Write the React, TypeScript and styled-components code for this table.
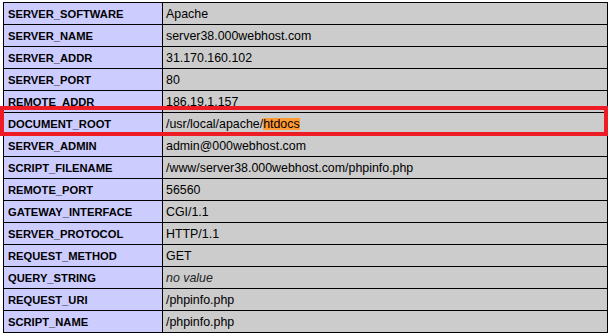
import styled, { createGlobalStyle } from "styled-components";

type Row = { key: string; value: string; empty?: boolean; mark?: string };

const rows: Row[] = [
  { key: "SERVER_SOFTWARE", value: "Apache" },
  { key: "SERVER_NAME", value: "server38.000webhost.com" },
  { key: "SERVER_ADDR", value: "31.170.160.102" },
  { key: "SERVER_PORT", value: "80" },
  { key: "REMOTE_ADDR", value: "186.19.1.157" },
  { key: "DOCUMENT_ROOT", value: "/usr/local/apache/", mark: "htdocs" },
  { key: "SERVER_ADMIN", value: "admin@000webhost.com" },
  { key: "SCRIPT_FILENAME", value: "/www/server38.000webhost.com/phpinfo.php" },
  { key: "REMOTE_PORT", value: "56560" },
  { key: "GATEWAY_INTERFACE", value: "CGI/1.1" },
  { key: "SERVER_PROTOCOL", value: "HTTP/1.1" },
  { key: "REQUEST_METHOD", value: "GET" },
  { key: "QUERY_STRING", value: "no value", empty: true },
  { key: "REQUEST_URI", value: "/phpinfo.php" },
  { key: "SCRIPT_NAME", value: "/phpinfo.php" },
];

const GlobalStyle = createGlobalStyle`
  body {
    margin: 0;
    background: #ffffff;
    font-family: "Liberation Sans", Arial, sans-serif;
  }
`;

const Page = styled.div`
  position: relative;
  padding: 2px 0 0 3px;
`;

const Table = styled.table`
  border-collapse: collapse;
  width: 605px;
  table-layout: fixed;
`;

const KeyCell = styled.td`
  width: 159px;
  height: 21px;
  padding: 0 4px;
  border: 1px solid #000000;
  background: #ccccff;
  color: #000000;
  font-weight: bold;
  font-size: 11.2px;
  white-space: nowrap;
  box-sizing: border-box;
`;

const ValueCell = styled.td`
  height: 21px;
  padding: 0 3px;
  border: 1px solid #000000;
  background: #cccccc;
  color: #000000;
  font-size: 12.4px;
  white-space: nowrap;
`;

const NoValue = styled.i`
  color: #222222;
`;

const Mark = styled.span`
  display: inline-block;
  background: #ff9933;
  height: 12px;
  line-height: 12px;
`;

// red frame drawn over the DOCUMENT_ROOT row
const Frame = styled.div`
  position: absolute;
  left: 0;
  top: 106px;
  width: 608px;
  height: 30px;
  border: 4px solid #ed1c24;
  box-sizing: border-box;
  pointer-events: none;
`;

export default function App() {
  return (
    <>
      <GlobalStyle />
      <Page>
        <Table>
          <tbody>
            {rows.map((r) => (
              <tr key={r.key}>
                <KeyCell>{r.key}</KeyCell>
                <ValueCell>
                  {r.empty ? <NoValue>{r.value}</NoValue> : r.value}
                  {r.mark && <Mark>{r.mark}</Mark>}
                </ValueCell>
              </tr>
            ))}
          </tbody>
        </Table>
        <Frame />
      </Page>
    </>
  );
}
